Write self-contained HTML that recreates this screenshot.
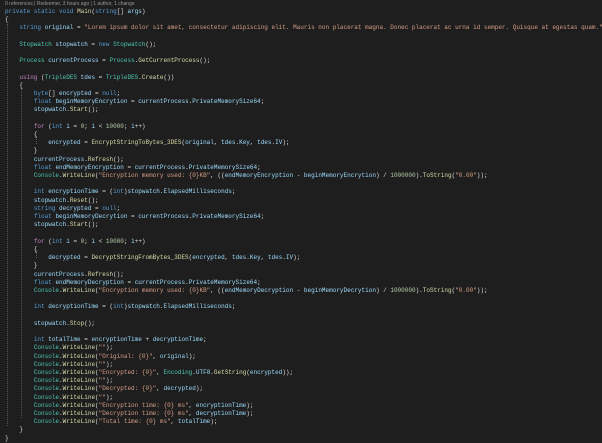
<!DOCTYPE html>
<html><head><meta charset="utf-8"><style>
html,body{margin:0;padding:0;background:#1e1e1e;width:602px;height:442px;overflow:hidden}
.cl{position:absolute;left:5px;top:1px;font:5px "Liberation Sans",sans-serif;color:#999}
pre{position:absolute;left:5px;top:8px;margin:0;font:6px/8.2px "Liberation Mono",monospace;color:#dcdcdc}
.k{color:#569cd6}.c{color:#c586c0}.t{color:#4ec9b0}.m{color:#dcdcaa}.v{color:#9cdcfe}.s{color:#d69d85}.n{color:#b5cea8}
.g{position:absolute;width:0;border-left:1px dotted #555}
</style></head><body>
<div class="cl">0 references | Redeemer, 3 hours ago | 1 author, 1 change</div>
<div class="g" style="left:7px;top:24px;height:402px"></div>
<div class="g" style="left:21px;top:88px;height:330px"></div>
<div class="g" style="left:36px;top:136px;height:8px"></div>
<div class="g" style="left:36px;top:250px;height:8px"></div>
<pre><span class="k">private</span> <span class="k">static</span> <span class="k">void</span> <span class="m">Main</span>(<span class="k">string</span>[] <span class="v">args</span>)
{
    <span class="k">string</span> <span class="v">original</span> = <span class="s">"Lorem ipsum dolor sit amet, consectetur adipiscing elit. Mauris non placerat magna. Donec placerat ac urna id semper. Quisque at egestas quam."</span>;

    <span class="t">Stopwatch</span> <span class="v">stopwatch</span> = <span class="k">new</span> <span class="t">Stopwatch</span>();

    <span class="t">Process</span> <span class="v">currentProcess</span> = <span class="t">Process</span>.<span class="m">GetCurrentProcess</span>();

    <span class="c">using</span> (<span class="t">TripleDES</span> <span class="v">tdes</span> = <span class="t">TripleDES</span>.<span class="m">Create</span>())
    {
        <span class="k">byte</span>[] <span class="v">encrypted</span> = <span class="k">null</span>;
        <span class="k">float</span> <span class="v">beginMemoryEncrytion</span> = <span class="v">currentProcess</span>.<span class="v">PrivateMemorySize64</span>;
        <span class="v">stopwatch</span>.<span class="m">Start</span>();

        <span class="c">for</span> (<span class="k">int</span> <span class="v">i</span> = <span class="n">0</span>; <span class="v">i</span> &lt; <span class="n">10000</span>; <span class="v">i</span>++)
        {
            <span class="v">encrypted</span> = <span class="m">EncryptStringToBytes_3DES</span>(<span class="v">original</span>, <span class="v">tdes</span>.<span class="v">Key</span>, <span class="v">tdes</span>.<span class="v">IV</span>);
        }
        <span class="v">currentProcess</span>.<span class="m">Refresh</span>();
        <span class="k">float</span> <span class="v">endMemoryEncryption</span> = <span class="v">currentProcess</span>.<span class="v">PrivateMemorySize64</span>;
        <span class="t">Console</span>.<span class="m">WriteLine</span>(<span class="s">"Encryption memory used: {0}KB"</span>, ((<span class="v">endMemoryEncryption</span> - <span class="v">beginMemoryEncrytion</span>) / <span class="n">1000000</span>).<span class="m">ToString</span>(<span class="s">"0.00"</span>));

        <span class="k">int</span> <span class="v">encryptionTime</span> = (<span class="k">int</span>)<span class="v">stopwatch</span>.<span class="v">ElapsedMilliseconds</span>;
        <span class="v">stopwatch</span>.<span class="m">Reset</span>();
        <span class="k">string</span> <span class="v">decrypted</span> = <span class="k">null</span>;
        <span class="k">float</span> <span class="v">beginMemoryDecrytion</span> = <span class="v">currentProcess</span>.<span class="v">PrivateMemorySize64</span>;
        <span class="v">stopwatch</span>.<span class="m">Start</span>();

        <span class="c">for</span> (<span class="k">int</span> <span class="v">i</span> = <span class="n">0</span>; <span class="v">i</span> &lt; <span class="n">10000</span>; <span class="v">i</span>++)
        {
            <span class="v">decrypted</span> = <span class="m">DecryptStringFromBytes_3DES</span>(<span class="v">encrypted</span>, <span class="v">tdes</span>.<span class="v">Key</span>, <span class="v">tdes</span>.<span class="v">IV</span>);
        }
        <span class="v">currentProcess</span>.<span class="m">Refresh</span>();
        <span class="k">float</span> <span class="v">endMemoryDecryption</span> = <span class="v">currentProcess</span>.<span class="v">PrivateMemorySize64</span>;
        <span class="t">Console</span>.<span class="m">WriteLine</span>(<span class="s">"Encryption memory used: {0}KB"</span>, ((<span class="v">endMemoryDecryption</span> - <span class="v">beginMemoryDecrytion</span>) / <span class="n">1000000</span>).<span class="m">ToString</span>(<span class="s">"0.00"</span>));

        <span class="k">int</span> <span class="v">decryptionTime</span> = (<span class="k">int</span>)<span class="v">stopwatch</span>.<span class="v">ElapsedMilliseconds</span>;

        <span class="v">stopwatch</span>.<span class="m">Stop</span>();

        <span class="k">int</span> <span class="v">totalTime</span> = <span class="v">encryptionTime</span> + <span class="v">decryptionTime</span>;
        <span class="t">Console</span>.<span class="m">WriteLine</span>(<span class="s">""</span>);
        <span class="t">Console</span>.<span class="m">WriteLine</span>(<span class="s">"Original: {0}"</span>, <span class="v">original</span>);
        <span class="t">Console</span>.<span class="m">WriteLine</span>(<span class="s">""</span>);
        <span class="t">Console</span>.<span class="m">WriteLine</span>(<span class="s">"Encrypted: {0}"</span>, <span class="t">Encoding</span>.<span class="v">UTF8</span>.<span class="m">GetString</span>(<span class="v">encrypted</span>));
        <span class="t">Console</span>.<span class="m">WriteLine</span>(<span class="s">""</span>);
        <span class="t">Console</span>.<span class="m">WriteLine</span>(<span class="s">"Decrypted: {0}"</span>, <span class="v">decrypted</span>);
        <span class="t">Console</span>.<span class="m">WriteLine</span>(<span class="s">""</span>);
        <span class="t">Console</span>.<span class="m">WriteLine</span>(<span class="s">"Encryption time: {0} ms"</span>, <span class="v">encryptionTime</span>);
        <span class="t">Console</span>.<span class="m">WriteLine</span>(<span class="s">"Decryption time: {0} ms"</span>, <span class="v">decryptionTime</span>);
        <span class="t">Console</span>.<span class="m">WriteLine</span>(<span class="s">"Total time: {0} ms"</span>, <span class="v">totalTime</span>);
    }
}</pre>
</body></html>
